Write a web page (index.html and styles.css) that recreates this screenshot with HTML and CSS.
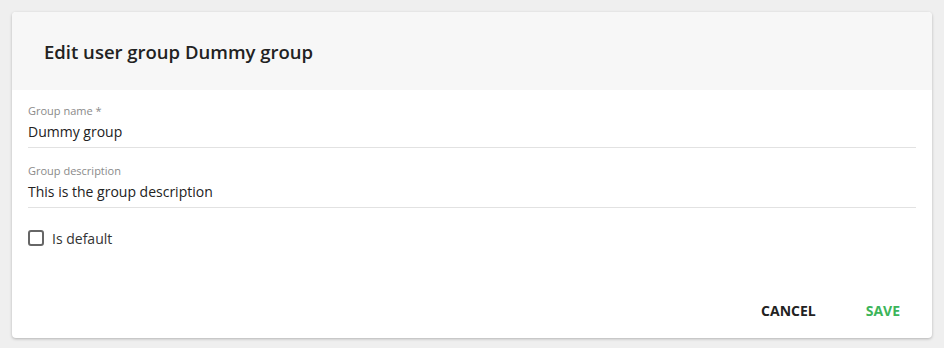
FILE: index.html
```html
<!DOCTYPE html>
<html>
<head>
<meta charset="utf-8">
<link rel="stylesheet" href="styles.css">
</head>
<body>
<div class="card">
  <div class="card-header">
    <h1 class="title">Edit user group Dummy group</h1>
  </div>
  <div class="card-body">
    <div class="field">
      <label class="field-label">Group name *</label>
      <div class="field-value">Dummy group</div>
    </div>
    <div class="field">
      <label class="field-label">Group description</label>
      <div class="field-value">This is the group description</div>
    </div>
    <div class="check-row">
      <span class="checkbox"></span>
      <span class="check-label">Is default</span>
    </div>
  </div>
  <div class="card-actions">
    <button class="btn btn-cancel">CANCEL</button>
    <button class="btn btn-save">SAVE</button>
  </div>
</div>
</body>
</html>
```
FILE: styles.css
```css
html, body {
  margin: 0;
  padding: 0;
}
body {
  background: #efefef;
  padding: 12px;
  font-family: "Open Sans", "Liberation Sans", sans-serif;
  color: #222;
}
.card {
  width: 920px;
  height: 326px;
  background: #fff;
  border-radius: 4px;
  box-shadow: 0 1px 3px rgba(0,0,0,0.25);
  display: flex;
  flex-direction: column;
  overflow: hidden;
}
.card-header {
  height: 78px;
  background: #f7f7f7;
  display: flex;
  align-items: center;
  padding-left: 32px;
  box-sizing: border-box;
}
.title {
  margin: 0;
  font-size: 18.5px;
  font-weight: 600;
  color: #222;
}
.card-body {
  padding: 14px 16px 0 16px;
  flex: 1;
  display: flex;
  flex-direction: column;
  gap: 16px;
}
.field {
  border-bottom: 1px solid #e2e2e2;
  height: 44px;
  box-sizing: border-box;
}
.field-label {
  display: block;
  font-size: 11px;
  line-height: 14px;
  color: #8a8a8a;
}
.field-value {
  font-size: 14px;
  line-height: 22px;
  margin-top: 3px;
  color: #222;
}
.check-row {
  display: flex;
  align-items: center;
  height: 20px;
  margin-top: 4px;
}
.checkbox {
  width: 16px;
  height: 16px;
  box-sizing: border-box;
  border: 2px solid #666;
  border-radius: 3px;
  margin-right: 8px;
}
.check-label {
  font-size: 14px;
  color: #333;
}
.card-actions {
  display: flex;
  justify-content: flex-end;
  gap: 2px;
  padding: 0 16px 10px 0;
}
.btn {
  background: none;
  border: none;
  font-family: inherit;
  font-size: 14px;
  font-weight: 700;
  padding: 8px 16px;
  cursor: pointer;
}
.btn-cancel {
  color: #222;
  margin-right: 16px;
}
.btn-save {
  color: #3cb55a;
}
```
